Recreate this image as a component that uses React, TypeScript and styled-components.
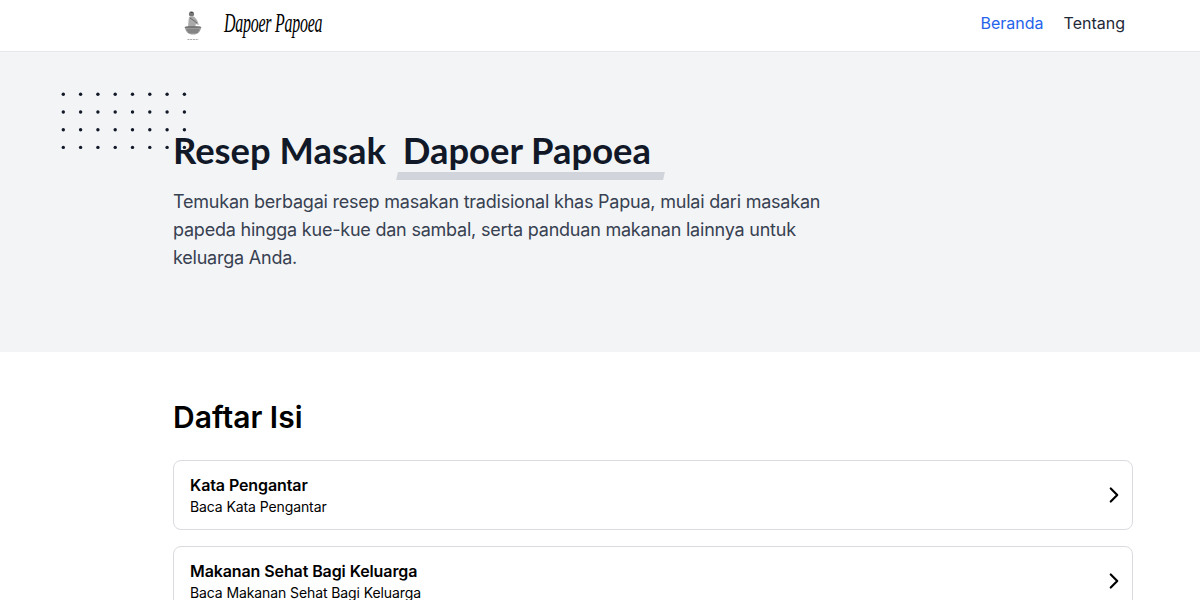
import React from "react";
import styled, { createGlobalStyle } from "styled-components";
import { ChevronRight } from "lucide-react";

const Global = createGlobalStyle`
  html, body { margin: 0; padding: 0; background: #fff; }
  body { font-family: Inter, "Liberation Sans", sans-serif; height: 600px; overflow: hidden; }
  * { box-sizing: border-box; }
`;

const Nav = styled.nav`
  height: 52px;
  border-bottom: 1px solid #e5e7eb;
  display: flex;
  align-items: center;
  justify-content: space-between;
  padding: 0 75px 5px 181px;
`;
const Brand = styled.div`
  display: flex;
  align-items: center;
  gap: 19px;
  margin-bottom: -3px;
`;
const LogoText = styled.span`
  font-family: "Liberation Serif", serif;
  font-style: italic;
  font-size: 27px;
  line-height: 30px;
  color: #000;
  white-space: nowrap;
  display: inline-block;
  transform-origin: left center;
  transform: scaleX(0.59);
  width: 98px;
  letter-spacing: -0.4px;
  margin-top: -3px;
`;
const NavLinks = styled.div`
  display: flex;
  gap: 20px;
`;
const NavLink = styled.a<{ $active?: boolean }>`
  font-size: 16px;
  line-height: 24px;
  color: ${(p) => (p.$active ? "#2563eb" : "#1f2937")};
`;
const Hero = styled.section`
  position: relative;
  height: 300px;
  background: #f3f4f6;
  padding: 75px 355px 0 173px;
`;
const Dots = styled.svg`
  position: absolute;
  left: 60px;
  top: 39px;
`;
const Title = styled.h1`
  margin: 0 0 15px;
  font-family: Lato, sans-serif;
  font-size: 36.4px;
  line-height: 46px;
  font-weight: 700;
  color: #111827;
  position: relative;
  white-space: nowrap;
`;
const Mark = styled.span`
  position: relative;
  margin-left: 2px;
  display: inline-block;
  padding: 0 13px 0 6px;
  z-index: 0;
  &::after {
    content: "";
    position: absolute;
    left: 0;
    right: 0;
    bottom: -7px;
    height: 8px;
    background: #d1d5db;
    transform: skewX(-12deg);
    z-index: -1;
  }
`;
const Lead = styled.p`
  margin: 0;
  width: 672px;
  font-size: 18px;
  line-height: 28px;
  letter-spacing: -0.22px;
  color: #374151;
`;
const Content = styled.main`
  padding: 45px 67px 0 173px;
`;
const SectionTitle = styled.h2`
  margin: 0 0 23px;
  font-size: 30px;
  line-height: 40px;
  font-weight: 600;
  color: #000;
`;
const List = styled.div`
  display: flex;
  flex-direction: column;
  gap: 16px;
`;
const Card = styled.a`
  height: 70px;
  flex: none;
  border: 1px solid #d9dbdf;
  border-radius: 8px;
  padding: 0 5px 0 16px;
  display: flex;
  align-items: center;
  justify-content: space-between;
  color: #000;
`;
const CardText = styled.div`
  display: flex;
  flex-direction: column;
`;
const CardTitle = styled.span`
  font-size: 16px;
  line-height: 24px;
  font-weight: 600;
  letter-spacing: -0.1px;
`;
const CardSub = styled.span`
  font-size: 14px;
  line-height: 20px;
  letter-spacing: -0.1px;
`;

const items = ["Kata Pengantar", "Makanan Sehat Bagi Keluarga"];

function Emblem() {
  return (
    <svg width="24" height="32" viewBox="0 0 24 32" fill="none">
      <circle cx="10.5" cy="5" r="2.6" fill="#777" />
      <path d="M8 8 L13 7.5 L16 11 L18 16 L15 15 L14 18 L7 18 L7.5 12 Z" fill="#aaa" />
      <path d="M9 9 L12 11 L16 14" stroke="#555" strokeWidth="0.8" />
      <path d="M8.5 2.8 L12.5 3 L11 4 Z" fill="#333" />
      <ellipse cx="12" cy="18.5" rx="8.5" ry="1.6" fill="#777" />
      <path d="M4 19 C5 23 7 25.5 12 25.5 C17 25.5 19 23 20 19 Z" fill="#9a9a9a" />
      <path d="M6 21 H18 M7 23 H17" stroke="#555" strokeWidth="0.6" />
      <path d="M6.5 30.5 H17.5" stroke="#aaa" strokeWidth="1" strokeDasharray="2 0.7" />
    </svg>
  );
}

export default function App() {
  const cols = Array.from({ length: 8 }, (_, i) => i);
  const rows = Array.from({ length: 4 }, (_, i) => i);
  return (
    <>
      <Global />
      <Nav>
        <Brand>
          <Emblem />
          <LogoText>Dapoer Papoea</LogoText>
        </Brand>
        <NavLinks>
          <NavLink $active>Beranda</NavLink>
          <NavLink>Tentang</NavLink>
        </NavLinks>
      </Nav>
      <Hero>
        <Dots width="130" height="64" viewBox="0 0 130 64">
          {rows.map((r) =>
            cols.map((c) => (
              <circle key={`${r}-${c}`} cx={3.3 + c * 17.3} cy={3.3 + r * 17.7} r="1.7" fill="#111827" />
            ))
          )}
        </Dots>
        <Title>
          Resep Masak <Mark>Dapoer Papoea</Mark>
        </Title>
        <Lead>
          Temukan berbagai resep masakan tradisional khas Papua, mulai dari masakan papeda hingga kue-kue dan sambal, serta panduan makanan lainnya untuk keluarga Anda.
        </Lead>
      </Hero>
      <Content>
        <SectionTitle>Daftar Isi</SectionTitle>
        <List>
          {items.map((t) => (
            <Card key={t}>
              <CardText>
                <CardTitle>{t}</CardTitle>
                <CardSub>Baca {t}</CardSub>
              </CardText>
              <ChevronRight size={26} color="#000" strokeWidth={2} />
            </Card>
          ))}
        </List>
      </Content>
    </>
  );
}
